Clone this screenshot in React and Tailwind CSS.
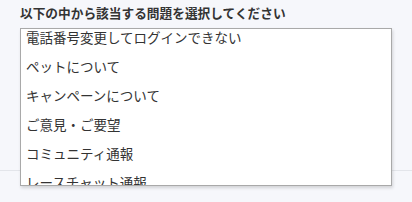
const options = [
  "電話番号変更してログインできない",
  "ペットについて",
  "キャンペーンについて",
  "ご意見・ご要望",
  "コミュニティ通報",
  "レースチャット通報",
];

export default function App() {
  return (
    <div
      className="relative w-[412px] h-[202px] overflow-hidden bg-[#f6f7fb]"
      style={{ fontFamily: '"Noto Sans CJK JP", "Noto Sans", sans-serif' }}
    >
      <div className="h-[171px] border-b border-[#e3e5ea] px-5 pt-[4px]">
        <p className="text-[12.7px] leading-[18px] font-bold text-[#333]">
          以下の中から該当する問題を選択してください
        </p>
      </div>

      {/* dropdown list */}
      <div className="absolute left-[20px] top-[28px] w-[372px] h-[158px] overflow-hidden bg-white border border-[#a9a9a9] shadow-[1px_2px_3px_rgba(0,0,0,0.15)]">
        <ul className="-mt-[6px]">
          {options.map((opt, i) => (
            <li
              key={i}
              className="h-[29px] flex items-center pl-[5px] text-[13.5px] text-[#333] whitespace-nowrap"
            >
              {opt}
            </li>
          ))}
        </ul>
      </div>
    </div>
  );
}
